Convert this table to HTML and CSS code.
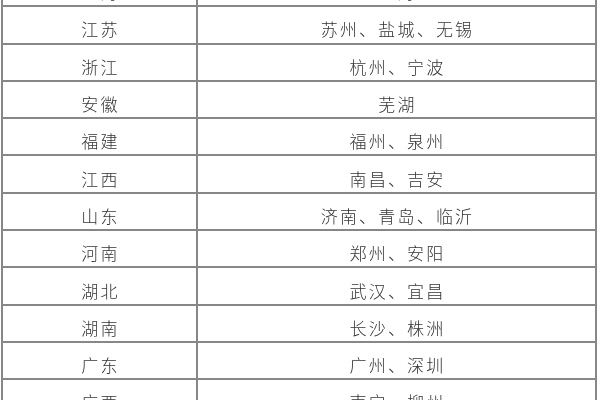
FILE: index.html
```html
<!DOCTYPE html>
<html lang="zh-CN">
<head>
<meta charset="utf-8">
<link rel="stylesheet" href="styles.css">
</head>
<body>
<div class="sheet">
<table class="grid">
<tbody>
<tr><td class="prov">上海</td><td class="city">上海</td></tr>
<tr><td class="prov">江苏</td><td class="city">苏州、盐城、无锡</td></tr>
<tr><td class="prov">浙江</td><td class="city">杭州、宁波</td></tr>
<tr><td class="prov">安徽</td><td class="city">芜湖</td></tr>
<tr><td class="prov">福建</td><td class="city">福州、泉州</td></tr>
<tr><td class="prov">江西</td><td class="city">南昌、吉安</td></tr>
<tr><td class="prov">山东</td><td class="city">济南、青岛、临沂</td></tr>
<tr><td class="prov">河南</td><td class="city">郑州、安阳</td></tr>
<tr><td class="prov">湖北</td><td class="city">武汉、宜昌</td></tr>
<tr><td class="prov">湖南</td><td class="city">长沙、株洲</td></tr>
<tr><td class="prov">广东</td><td class="city">广州、深圳</td></tr>
<tr><td class="prov">广西</td><td class="city">南宁、柳州</td></tr>
</tbody>
</table>
</div>
</body>
</html>
```
FILE: styles.css
```css
html, body {
  margin: 0;
  padding: 0;
  background: #ffffff;
}
body {
  width: 600px;
  height: 400px;
  overflow: hidden;
}
.sheet {
  padding-left: 1px;
  margin-top: -32px;
}
.grid {
  border-collapse: collapse;
  table-layout: fixed;
  width: 596px;
  font-family: "Noto Sans CJK SC", sans-serif;
  font-weight: 300;
  font-size: 17px;
  color: #333333;
  filter: blur(0.35px);
}
.grid td {
  border: 2px solid #878787;
  height: 37.3px;
  box-sizing: border-box;
  padding: 9px 0 0 2px;
  text-align: center;
  vertical-align: middle;
  letter-spacing: 2.2px;
  line-height: 20px;
}
.grid .prov {
  width: 195px;
}
```
